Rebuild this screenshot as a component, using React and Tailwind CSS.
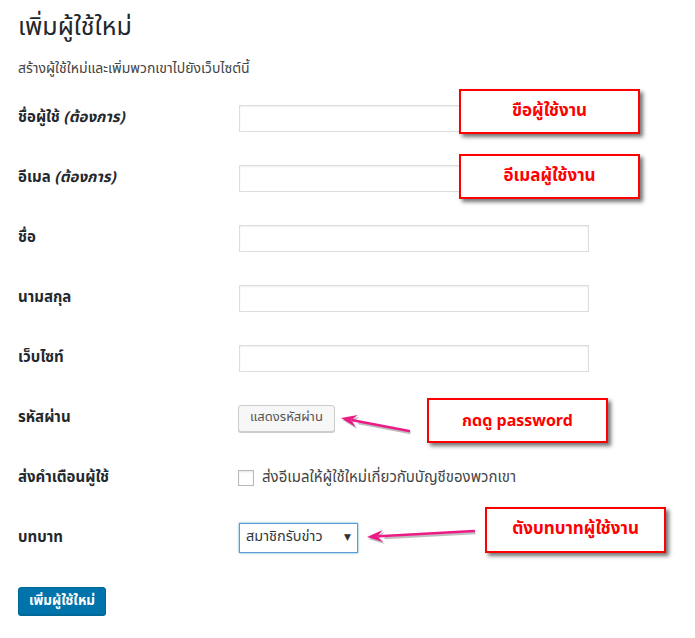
import React from "react";

const font = { fontFamily: '"Segoe UI", Tahoma, "Noto Sans Thai", "Noto Sans", "DejaVu Sans", sans-serif' };

function Row({ label, children }) {
  return (
    <div className="flex h-[60px] items-center">
      <div className="w-[221px] text-[15px] font-bold text-[#23282d]">{label}</div>
      <div className="flex items-center">{children}</div>
    </div>
  );
}

function Input() {
  return <div className="h-[27px] w-[350px] border border-[#dddddd] bg-white shadow-[inset_0_1px_2px_rgba(0,0,0,0.07)]" />;
}

function Callout({ className, children }) {
  return (
    <div
      className={
        "absolute flex items-center justify-center border-2 border-[#ff0000] bg-white font-bold text-[#ff0000] shadow-[3px_3px_4px_rgba(0,0,0,0.55)] " +
        className
      }
    >
      {children}
    </div>
  );
}

function Arrow({ x1, y1, x2, y2 }) {
  const ang = Math.atan2(y2 - y1, x2 - x1);
  const L = 16, W = 6;
  const bx = x2 - L * Math.cos(ang), by = y2 - L * Math.sin(ang);
  const px = -Math.sin(ang) * W, py = Math.cos(ang) * W;
  const pts = `${x2},${y2} ${bx + px},${by + py} ${bx + L * 0.35 * Math.cos(ang)},${by + L * 0.35 * Math.sin(ang)} ${bx - px},${by - py}`;
  return (
    <g>
      <g transform="translate(1.5,2)" opacity="0.25">
        <line x1={x1} y1={y1} x2={bx} y2={by} stroke="#000" strokeWidth="2.5" />
        <polygon points={pts} fill="#000" />
      </g>
      <line x1={x1} y1={y1} x2={bx + 4 * Math.cos(ang)} y2={by + 4 * Math.sin(ang)} stroke="#ec1c86" strokeWidth="2.5" strokeLinecap="round" />
      <polygon points={pts} fill="#ec1c86" />
    </g>
  );
}

export default function App() {
  return (
    <div className="relative h-[638px] w-[695px] overflow-hidden bg-white text-[#23282d]" style={font}>
      <div className="pl-[18px]">
        <div className="h-[44px] pt-[12px]">
          <h1 className="text-[25px] font-normal leading-[30px] text-[#23282d]">เพิ่มผู้ใช้ใหม่</h1>
        </div>
        <div className="flex h-[44px] items-center pt-[4px] text-[14px] text-[#444]">สร้างผู้ใช้ใหม่และเพิ่มพวกเขาไปยังเว็บไซต์นี้</div>

        <Row label={<>ชื่อผู้ใช้ <span className="italic">(ต้องการ)</span></>}>
          <Input />
        </Row>
        <Row label={<>อีเมล <span className="italic">(ต้องการ)</span></>}>
          <Input />
        </Row>
        <Row label="ชื่อ">
          <Input />
        </Row>
        <Row label="นามสกุล">
          <Input />
        </Row>
        <Row label="เว็บไซท์">
          <Input />
        </Row>
        <Row label="รหัสผ่าน">
          <div className="-ml-px flex h-[27px] w-[97px] items-center justify-center rounded-[3px] border border-[#cccccc] bg-[#f7f7f7] text-[13px] text-[#555] shadow-[0_1px_0_#cccccc]">
            แสดงรหัสผ่าน
          </div>
        </Row>
        <Row label="ส่งคำเตือนผู้ใช้">
          <div className="-ml-px flex items-center gap-[8px] text-[15px] text-[#444]">
            <div className="h-[16px] w-[16px] border border-[#b4b9be] bg-white shadow-[inset_0_1px_2px_rgba(0,0,0,0.1)]" />
            <span>ส่งอีเมลให้ผู้ใช้ใหม่เกี่ยวกับบัญชีของพวกเขา</span>
          </div>
        </Row>
        <Row label="บทบาท">
          <div className="flex h-[30px] w-[119px] items-center justify-between border border-[#5b9dd9] bg-white pl-[6px] pr-[6px] text-[14.5px] text-[#32373c] shadow-[0_0_2px_rgba(30,140,190,0.8)]">
            <span>สมาชิกรับข่าว</span>
            <span className="text-[9px] text-[#333]">▼</span>
          </div>
        </Row>

        <div className="mt-[19px]">
          <div className="flex h-[28px] w-[88px] items-center justify-center rounded-[3px] border border-[#006799] bg-[#0073aa] text-[13.5px] font-bold text-white shadow-[0_1px_0_#006799]">
            เพิ่มผู้ใช้ใหม่
          </div>
        </div>
      </div>

      <Callout className="left-[459px] top-[89px] h-[45px] w-[181px] text-[17px]">ขือผู้ใช้งาน</Callout>
      <Callout className="left-[459px] top-[154px] h-[45px] w-[181px] text-[17px]">อีเมลผู้ใช้งาน</Callout>
      <Callout className="left-[427px] top-[398px] h-[45px] w-[181px] text-[16px]">กดดู password</Callout>
      <Callout className="left-[485px] top-[507px] h-[46px] w-[181px] text-[17px]">ตังบทบาทผู้ใช้งาน</Callout>

      <svg className="pointer-events-none absolute left-0 top-0" width="695" height="638">
        <Arrow x1={409} y1={431} x2={341} y2={418} />
        <Arrow x1={474} y1={531} x2={367} y2={537} />
      </svg>
    </div>
  );
}
